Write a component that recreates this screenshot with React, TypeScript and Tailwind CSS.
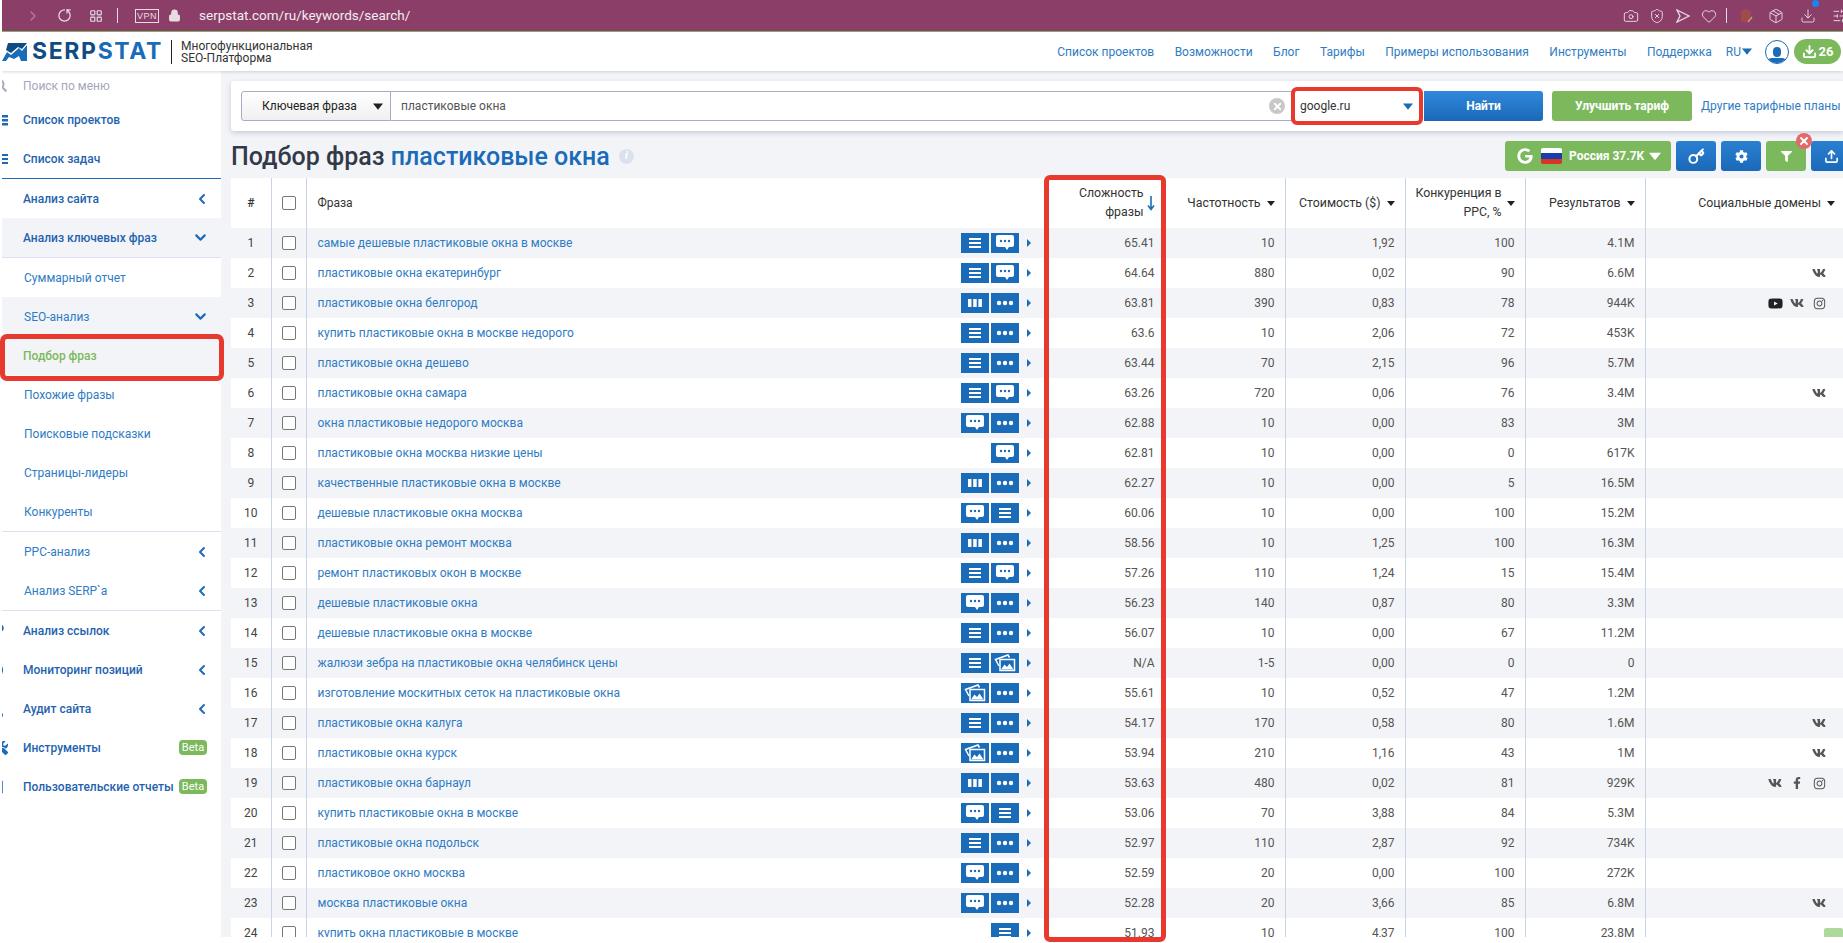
import React from "react";
import { Camera, ChevronDown, ChevronLeft, ChevronRight, Download, Heart, Key, LayoutGrid, Lock, Package, RotateCw, ShieldX, SlidersHorizontal, Upload, X } from "lucide-react";
import { FaCog, FaFacebookF, FaFilter, FaGoogle, FaInstagram, FaSearch, FaTools, FaVk, FaYoutube } from "react-icons/fa";

type Btn = "list" | "chat" | "cols" | "dots" | "img" | null;
type Row = [string, Btn, Btn, string, string, string, string, string, string[]];

const rows: Row[] = [
    ["самые дешевые пластиковые окна в москве", "list", "chat", "65.41", "10", "1,92", "100", "4.1M", []],
    ["пластиковые окна екатеринбург", "list", "chat", "64.64", "880", "0,02", "90", "6.6M", ["vk"]],
    ["пластиковые окна белгород", "cols", "dots", "63.81", "390", "0,83", "78", "944K", ["yt", "vk", "ig"]],
    ["купить пластиковые окна в москве недорого", "list", "dots", "63.6", "10", "2,06", "72", "453K", []],
    ["пластиковые окна дешево", "list", "dots", "63.44", "70", "2,15", "96", "5.7M", []],
    ["пластиковые окна самара", "list", "chat", "63.26", "720", "0,06", "76", "3.4M", ["vk"]],
    ["окна пластиковые недорого москва", "chat", "dots", "62.88", "10", "0,00", "83", "3M", []],
    ["пластиковые окна москва низкие цены", null, "chat", "62.81", "10", "0,00", "0", "617K", []],
    ["качественные пластиковые окна в москве", "cols", "dots", "62.27", "10", "0,00", "5", "16.5M", []],
    ["дешевые пластиковые окна москва", "chat", "list", "60.06", "10", "0,00", "100", "15.2M", []],
    ["пластиковые окна ремонт москва", "cols", "dots", "58.56", "10", "1,25", "100", "16.3M", []],
    ["ремонт пластиковых окон в москве", "list", "chat", "57.26", "110", "1,24", "15", "15.4M", []],
    ["дешевые пластиковые окна", "chat", "dots", "56.23", "140", "0,87", "80", "3.3M", []],
    ["дешевые пластиковые окна в москве", "list", "dots", "56.07", "10", "0,00", "67", "11.2M", []],
    ["жалюзи зебра на пластиковые окна челябинск цены", "list", "img", "N/A", "1-5", "0,00", "0", "0", []],
    ["изготовление москитных сеток на пластиковые окна", "img", "dots", "55.61", "10", "0,52", "47", "1.2M", []],
    ["пластиковые окна калуга", "list", "dots", "54.17", "170", "0,58", "80", "1.6M", ["vk"]],
    ["пластиковые окна курск", "img", "dots", "53.94", "210", "1,16", "43", "1M", ["vk"]],
    ["пластиковые окна барнаул", "cols", "dots", "53.63", "480", "0,02", "81", "929K", ["vk", "fb", "ig"]],
    ["купить пластиковые окна в москве", "chat", "list", "53.06", "70", "3,88", "84", "5.3M", []],
    ["пластиковые окна подольск", "list", "dots", "52.97", "110", "2,87", "92", "734K", []],
    ["пластиковое окно москва", "chat", "dots", "52.59", "20", "0,00", "100", "272K", []],
    ["москва пластиковые окна", "chat", "dots", "52.28", "20", "3,66", "85", "6.8M", ["vk"]],
    ["купить окна пластиковые в москве", null, "list", "51.93", "10", "4,37", "100", "23.8M", []],
];

function Caret({ className = "border-t-[#222]" }: { className?: string }) {
    return <span className={`inline-block shrink-0 w-0 h-0 border-x-[4px] border-t-[5px] border-x-transparent ${className}`} />;
}

function RowIcon({ type }: { type: Btn }) {
    if (type === "list") {
        return (
            <svg width="14" height="12" viewBox="0 0 14 12" fill="#fff">
                <rect x="1" y="1" width="12" height="2" />
                <rect x="1" y="5" width="12" height="2" />
                <rect x="1" y="9" width="12" height="2" />
            </svg>
        );
    }
    if (type === "chat") {
        return (
            <svg width="20" height="16" viewBox="0 0 20 16">
                <path d="M2 0h14a2 2 0 0 1 2 2v8a2 2 0 0 1-2 2h-3l-2 3-2-3H2a2 2 0 0 1-2-2V2a2 2 0 0 1 2-2z" fill="#fff" transform="translate(1 0)" />
                <circle cx="6" cy="6" r="1.2" fill="#1a6bb8" />
                <circle cx="10" cy="6" r="1.2" fill="#1a6bb8" />
                <circle cx="14" cy="6" r="1.2" fill="#1a6bb8" />
            </svg>
        );
    }
    if (type === "cols") {
        return (
            <svg width="14" height="8" viewBox="0 0 14 8" fill="#fff">
                <rect x="0" y="0" width="3.5" height="8" />
                <rect x="5.2" y="0" width="3.5" height="8" />
                <rect x="10.4" y="0" width="3.5" height="8" />
            </svg>
        );
    }
    if (type === "dots") {
        return (
            <svg width="18" height="6" viewBox="0 0 18 6" fill="#fff">
                <circle cx="3" cy="3" r="2.2" />
                <circle cx="9" cy="3" r="2.2" />
                <circle cx="15" cy="3" r="2.2" />
            </svg>
        );
    }
    return (
        <svg width="22" height="18" viewBox="0 0 22 18" fill="none" stroke="#fff" strokeWidth="1.5">
            <path d="M5 12 1.5 5.5 14 1l1.5 2.5" />
            <rect x="6" y="5.5" width="14.5" height="11" fill="#1a6bb8" />
            <path d="M7 15.5l3.5-5 2.5 2.5 2.5-3.5 4 6z" fill="#fff" stroke="none" />
        </svg>
    );
}

function ActionBtn({ type }: { type: Btn }) {
    if (!type) return <span className="w-[28px] h-5" />;
    return (
        <span className="w-[28px] h-5 bg-[#1a6bb8] flex items-center justify-center">
            <RowIcon type={type} />
        </span>
    );
}

function Social({ kind }: { kind: string }) {
    return (
        <span className="w-[22px] flex justify-center text-[#555]">
            {kind === "vk" && <FaVk size={14} />}
            {kind === "yt" && <FaYoutube size={15} className="text-[#222]" />}
            {kind === "ig" && <FaInstagram size={13} />}
            {kind === "fb" && <FaFacebookF size={12} />}
        </span>
    );
}

function MenuItem({ label, icon, arrow, sub, active, tint, beta }: { label: string; icon?: React.ReactNode; arrow?: "left" | "down"; sub?: boolean; active?: boolean; tint?: boolean; beta?: boolean }) {
    return (
        <div className={`h-[39px] shrink-0 flex items-center pr-[14px] ${tint ? "bg-[#f3f4f8]" : ""}`}>
            <span className="w-[21px] shrink-0 flex justify-start text-[#1a6bb8] overflow-hidden">{icon}</span>
            <span className={`flex-1 whitespace-nowrap text-[12px] ${active ? "text-[#7cb95c] font-medium" : sub ? "text-[#2f7cc4] ml-px" : "text-[#1f63b0] font-medium"}`}>{label}</span>
            {arrow === "left" && <ChevronLeft size={16} strokeWidth={3} className="text-[#1a6bb8] mr-[-3px]" />}
            {arrow === "down" && <ChevronDown size={17} strokeWidth={3} className="text-[#1a6bb8] mr-[-2px]" />}
            {beta && <span className="w-7 h-[15px] rounded-sm bg-[#7cb95c] text-white text-[11px] leading-[15px] text-center">Beta</span>}
        </div>
    );
}

function ClipIcon({ children }: { children: React.ReactNode }) {
    return <span className="ml-[-8px] flex">{children}</span>;
}

function Sidebar() {
    return (
        <aside className="w-[219px] shrink-0 h-full bg-white overflow-hidden flex flex-col">
            <div className="h-[29px] shrink-0 flex items-center">
                <span className="w-[21px] text-[#a9adba]"><ClipIcon><FaSearch size={13} /></ClipIcon></span>
                <span className="text-[12px] text-[#a3a7bb]">Поиск по меню</span>
            </div>
            <MenuItem label="Список проектов" icon={<ClipIcon><svg width="14" height="12" fill="#1a6bb8"><rect y="1" width="14" height="2.5" /><rect y="5" width="14" height="2.5" /><rect y="9" width="14" height="2.5" /></svg></ClipIcon>} />
            <MenuItem label="Список задач" icon={<ClipIcon><svg width="14" height="12" fill="#1a6bb8"><rect y="1" width="14" height="2" /><rect y="5" width="14" height="2" /><rect y="9" width="14" height="2" /></svg></ClipIcon>} />
            <div className="h-px shrink-0 bg-[#1a6bb8]" />
            <MenuItem label="Анализ сайта" arrow="left" icon={<ClipIcon><svg width="14" height="14" fill="#1a6bb8"><rect x="2" y="6" width="2" height="8" /><rect x="6" y="1" width="2" height="2" /><rect x="6" y="5" width="2" height="9" /></svg></ClipIcon>} />
            <MenuItem label="Анализ ключевых фраз" arrow="down" tint icon={<ClipIcon><svg width="14" height="14" fill="#1a6bb8"><circle cx="4" cy="6" r="4" /><circle cx="4" cy="6" r="1.2" fill="#f3f4f8" /></svg></ClipIcon>} />
            <div className="h-px shrink-0 bg-[#dbe2ef]" />
            <MenuItem label="Суммарный отчет" sub />
            <MenuItem label="SEO-анализ" sub arrow="down" tint />
            <MenuItem label="Подбор фраз" active tint />
            <MenuItem label="Похожие фразы" sub />
            <MenuItem label="Поисковые подсказки" sub />
            <MenuItem label="Страницы-лидеры" sub />
            <MenuItem label="Конкуренты" sub />
            <div className="h-px shrink-0 bg-[#dbe2ef]" />
            <MenuItem label="PPC-анализ" sub arrow="left" />
            <MenuItem label="Анализ SERP`a" sub arrow="left" />
            <div className="h-px shrink-0 bg-[#dbe2ef]" />
            <MenuItem label="Анализ ссылок" arrow="left" icon={<ClipIcon><svg width="14" height="14" fill="none" stroke="#1a6bb8" strokeWidth="2"><path d="M2 3a3.5 3 0 1 1 4 4l-2 3" /></svg></ClipIcon>} />
            <MenuItem label="Мониторинг позиций" arrow="left" icon={<ClipIcon><svg width="14" height="16" fill="none" stroke="#1a6bb8" strokeWidth="2.2"><path d="M2 2a6 6 0 0 1 0 12" /></svg></ClipIcon>} />
            <MenuItem label="Аудит сайта" arrow="left" icon={<ClipIcon><svg width="14" height="16" fill="none" stroke="#1a6bb8" strokeWidth="1.5"><path d="M1 1v8h6v5M1 9v5" /><circle cx="7" cy="14" r="1.3" fill="#1a6bb8" /></svg></ClipIcon>} />
            <MenuItem label="Инструменты" beta icon={<ClipIcon><FaTools size={14} /></ClipIcon>} />
            <MenuItem label="Пользовательские отчеты" beta icon={<ClipIcon><svg width="14" height="14" fill="none" stroke="#1a6bb8" strokeWidth="1.5"><rect x="1" y="1.5" width="7" height="11" /><path d="M2 5h4M2 8h4" /></svg></ClipIcon>} />
            <div className="mt-[117px]">
                <MenuItem label="Как начать" icon={<ClipIcon><ChevronDown size={14} /></ClipIcon>} />
            </div>
        </aside>
    );
}

function BrowserBar() {
    return (
        <div className="h-[32px] shrink-0 bg-[#8b3f68] border-b border-[#7cb95c] flex items-center text-[#e9dbe3] relative">
            <ChevronRight size={16} className="ml-[23px] opacity-40" />
            <RotateCw size={15} className="ml-[16px] scale-x-[-1] rotate-90" />
            <LayoutGrid size={14} className="ml-[17px]" />
            <span className="ml-[14px] w-px h-[15px] bg-[#e9dbe3]" />
            <span className="ml-[17px] w-[24px] h-[14px] border border-[#e9dbe3] text-[9px] leading-[12px] tracking-wider text-center font-['Liberation_Sans',sans-serif]">VPN</span>
            <Lock size={13} fill="currentColor" className="ml-[9px]" />
            <span className="ml-[18px] text-[13.5px] text-[#f4ecf0] whitespace-nowrap">serpstat.com/ru/keywords/search/</span>
            <div className="ml-auto flex items-center">
                <Camera size={16} strokeWidth={1.4} />
                <ShieldX size={16} strokeWidth={1.4} className="ml-[10px]" />
                <svg width="16" height="14" viewBox="0 0 16 14" fill="none" stroke="#e9dbe3" strokeWidth="1.3" className="ml-[10px]"><path d="M2 1l12 6-12 6 3-6z" /></svg>
                <Heart size={16} strokeWidth={1.4} className="ml-[10px]" />
                <span className="ml-[9px] w-px h-[15px] bg-[#e9dbe3]" />
                <svg width="14" height="16" viewBox="0 0 14 16" className="ml-[12px]"><path d="M2 5a5 4 0 0 1 10 0l-1 5-4 5-5-2z" fill="#a04a4e" /><path d="M9 14l4-5" stroke="#c9a067" strokeWidth="1.5" /></svg>
                <Package size={16} strokeWidth={1.4} className="ml-[15px]" />
                <Download size={16} strokeWidth={1.4} className="ml-[16px]" />
                <SlidersHorizontal size={16} strokeWidth={1.4} className="ml-[16px] mr-[-5px]" />
            </div>
            <span className="absolute right-[24px] top-0 w-[7px] h-[7px] rounded-full bg-[#1a84f0]" />
        </div>
    );
}

function Header() {
    const links = ["Список проектов", "Возможности", "Блог", "Тарифы", "Примеры использования", "Инструменты", "Поддержка"];
    return (
        <header className="h-[39px] shrink-0 bg-white shadow-[0_1px_3px_rgba(0,0,0,0.15)] flex items-center relative z-10">
            <svg width="25" height="18" viewBox="0 0 25 18" className="shrink-0">
                <path d="M6 0h19l-5 6-4-2-7 6-5-3z" fill="#0f4c81" />
                <path d="M0 18 5 9l4 3 8-7 3 3 5-6v16H19l-2-5-5 3-5-2-3 4z" fill="#1a6bb8" />
            </svg>
            <span className="ml-[5px] text-[23px] leading-none font-bold tracking-[1.65px] text-[#0f4c81] font-['Inter',sans-serif] whitespace-nowrap">SERP<span className="text-[#1a6bb8]">STAT</span></span>
            <span className="ml-[8px] w-px h-6 bg-[#222]" />
            <span className="ml-[9px] text-[12px] leading-[12px] text-[#333]">Многофункциональная<br />SEO-Платформа</span>
            <nav className="ml-auto flex items-center gap-[20.5px] text-[12px] text-[#2f7cc4] whitespace-nowrap">
                {links.map((l) => <a key={l}>{l}</a>)}
            </nav>
            <span className="ml-[14px] text-[12px] text-[#2f7cc4]">RU</span>
            <Caret className="border-t-[#1a6bb8] ml-[2px] scale-125" />
            <span className="ml-[14px] w-[24px] h-[24px] rounded-full border border-[#1a6bb8] overflow-hidden flex flex-col items-center justify-end">
                <span className="w-[8px] h-[10px] rounded-full bg-[#1a6bb8] mb-px" />
                <span className="w-[18px] h-[5px] rounded-t bg-[#1a6bb8]" />
            </span>
            <span className="ml-[5px] mr-[2px] w-[47px] h-[25px] rounded-full bg-[#7cb95c] text-white text-[13px] font-bold flex items-center justify-center gap-[2px]">
                <Download size={15} strokeWidth={3} />26
            </span>
        </header>
    );
}

function SearchPanel() {
    return (
        <div className="h-[50px] mt-[10px] bg-white rounded-l-[3px] shadow-[0_2px_5px_rgba(70,80,130,0.25)] flex items-center pl-[10px] whitespace-nowrap overflow-visible">
            <div className="w-[150px] shrink-0 h-[30px] bg-gradient-to-b from-white to-[#f0f0f0] border border-[#a5adc4] rounded-l-[3px] text-[12px] text-[#222] flex items-center justify-between pl-[20px] pr-[8px]">
                Ключевая фраза<Caret className="border-t-[#222] scale-125" />
            </div>
            <div className="w-[901px] shrink-0 h-[30px] border-y border-r border-[#a5adc4] text-[12px] text-[#555] flex items-center justify-between pl-[10px] pr-[6px]">
                пластиковые окна
                <span className="w-4 h-4 rounded-full bg-[#c8c8c8] flex items-center justify-center"><X size={11} strokeWidth={4} className="text-white" /></span>
            </div>
            <div className="w-[132px] shrink-0 h-[30px] text-[12px] text-[#333] flex items-center justify-between pl-[8px] pr-[12px]">
                google.ru<Caret className="border-t-[#1a6bb8] scale-125" />
            </div>
            <div className="w-[119px] shrink-0 h-[30px] rounded-r-[3px] bg-gradient-to-b from-[#3088dc] to-[#1a69b8] text-white text-[12px] font-bold flex items-center justify-center">Найти</div>
            <div className="ml-[9px] w-[140px] shrink-0 h-[30px] rounded-[3px] bg-[#7cb95c] text-white text-[12px] font-bold flex items-center justify-center">Улучшить тариф</div>
            <span className="ml-[9px] text-[12px] text-[#2f7cc4]">Другие тарифные планы</span>
        </div>
    );
}

function TitleRow() {
    return (
        <div className="h-[30px] mt-[10px] flex items-center">
            <h1 className="text-[25px] font-medium text-[#333a47] whitespace-nowrap pt-[2px]">Подбор фраз <span className="text-[#1a6bb8]">пластиковые окна</span></h1>
            <span className="ml-[9px] w-[15px] h-[15px] rounded-full bg-[#dbe1ee] text-white text-[11px] italic font-bold flex items-center justify-center">i</span>
            <div className="ml-auto flex gap-[5px] mr-[-8px] text-white">
                <div className="w-[166px] h-[30px] rounded-[3px] bg-[#7cb95c] flex items-center pl-[12px] text-[12px] font-bold whitespace-nowrap">
                    <FaGoogle size={16} />
                    <span className="ml-[8px] w-[21px] h-[16px] flex flex-col overflow-hidden rounded-[2px]">
                        <i className="flex-1 bg-white" /><i className="flex-1 bg-[#1a3fa8]" /><i className="flex-1 bg-[#d8342c]" />
                    </span>
                    <span className="ml-[7px]">Россия 37.7K</span>
                    <Caret className="border-t-white ml-[7px] scale-150" />
                </div>
                <div className="w-[40px] h-[30px] rounded-[3px] bg-gradient-to-b from-[#2b80d2] to-[#1a69b8] flex items-center justify-center"><Key size={17} strokeWidth={2.8} /></div>
                <div className="w-[40px] h-[30px] rounded-[3px] bg-gradient-to-b from-[#2b80d2] to-[#1a69b8] flex items-center justify-center"><FaCog size={13} /></div>
                <div className="w-[40px] h-[30px] rounded-[3px] bg-[#7cb95c] flex items-center justify-center relative">
                    <FaFilter size={11} />
                    <span className="absolute right-[-6px] top-[-8px] w-4 h-4 rounded-full bg-[#e46a6a] flex items-center justify-center"><X size={12} strokeWidth={4} /></span>
                </div>
                <div className="w-[40px] h-[30px] rounded-[3px] bg-gradient-to-b from-[#2b80d2] to-[#1a69b8] flex items-center justify-center"><Upload size={15} strokeWidth={2.6} /></div>
            </div>
        </div>
    );
}

function KeywordTable() {
    const th = "border-r border-[#c9d4e6] font-normal text-[12.3px] leading-[19px] text-[#333] text-right pr-[10px]";
    const td = "border-r border-[#c9d4e6] text-[12px] text-[#555] text-right pr-[10px]";
    return (
        <div className="mt-[7px] bg-white overflow-hidden flex-1 min-h-0">
            <table className="w-full table-fixed border-collapse">
                <colgroup>
                    <col className="w-[40px]" />
                    <col className="w-[35px]" />
                    <col />
                    <col className="w-[120px]" />
                    <col className="w-[120px]" />
                    <col className="w-[120px]" />
                    <col className="w-[120px]" />
                    <col className="w-[120px]" />
                    <col className="w-[198px]" />
                </colgroup>
                <thead>
                    <tr className="h-[50px]">
                        <th className="border-r border-[#c9d4e6] text-[12px] font-medium text-[#333]">#</th>
                        <th className="border-r border-[#c9d4e6]"><span className="block mx-auto w-[14px] h-[14px] border border-[#777] rounded-[2px] bg-white" /></th>
                        <th className="text-left pl-[11px] font-normal text-[12px] text-[#333]">Фраза</th>
                        <th className={`${th} pr-[9px]`}>
                            <div className="flex items-center justify-end gap-[3px]">
                                <span>Сложность<br />фразы</span>
                                <svg width="8" height="15" viewBox="0 0 8 15" fill="none" stroke="#1a6bb8" strokeWidth="1.6"><path d="M4 0v13M1 9.5 4 13.5 7 9.5" /></svg>
                            </div>
                        </th>
                        <th className={th}><div className="flex items-center justify-end gap-[6px] whitespace-nowrap">Частотность<Caret /></div></th>
                        <th className={th}><div className="flex items-center justify-end gap-[6px] whitespace-nowrap">Стоимость ($)<Caret /></div></th>
                        <th className={th}><div className="flex items-center justify-end gap-[5px]"><span>Конкуренция в<br />PPC, %</span><Caret /></div></th>
                        <th className={th}><div className="flex items-center justify-end gap-[6px] whitespace-nowrap">Результатов<Caret /></div></th>
                        <th className="font-normal text-[12.3px] text-[#333] pr-[8px]"><div className="flex items-center justify-end gap-[6px] whitespace-nowrap">Социальные домены<Caret /></div></th>
                    </tr>
                </thead>
                <tbody>
                    {rows.map((r, i) => (
                        <tr key={i} className={`h-[30px] ${i % 2 === 0 ? "bg-[#f3f4f8]" : "bg-white"}`}>
                            <td className="border-r border-[#c9d4e6] text-center text-[12px] text-[#444]">{i + 1}</td>
                            <td className="border-r border-[#c9d4e6]"><span className="block mx-auto w-[14px] h-[14px] border border-[#777] rounded-[2px] bg-white" /></td>
                            <td className="pl-[11px] pr-[14px]">
                                <div className="flex items-center">
                                    <a className="flex-1 text-[12px] text-[#2f7cc4] whitespace-nowrap">{r[0]}</a>
                                    <span className="flex gap-[2px] items-center">
                                        <ActionBtn type={r[1]} />
                                        <ActionBtn type={r[2]} />
                                        <span className="ml-[6px] w-0 h-0 border-y-[4px] border-l-[4px] border-y-transparent border-l-[#1a6bb8]" />
                                    </span>
                                </div>
                            </td>
                            <td className={td}>{r[3]}</td>
                            <td className={td}>{r[4]}</td>
                            <td className={td}>{r[5]}</td>
                            <td className={td}>{r[6]}</td>
                            <td className={td}>{r[7]}</td>
                            <td className="pr-[13px]"><div className="flex justify-end items-center">{r[8].map((s) => <Social key={s} kind={s} />)}</div></td>
                        </tr>
                    ))}
                </tbody>
            </table>
        </div>
    );
}

export default function App() {
    return (
        <div className="relative w-[1843px] h-[943px] bg-white pl-[2px] overflow-hidden font-['Roboto',sans-serif]">
            <div className="h-[937px] flex flex-col overflow-hidden">
                <BrowserBar />
                <Header />
                <div className="flex-1 min-h-0 flex bg-[#f3f4f8]">
                    <Sidebar />
                    <main className="flex-1 min-w-0 pl-[10px] flex flex-col">
                        <SearchPanel />
                        <TitleRow />
                        <KeywordTable />
                    </main>
                </div>
            </div>

            {/* red annotations drawn over the screenshot */}
            <div className="absolute left-0 top-[334px] w-[224px] h-[47px] border-[5px] border-[#e8392f] rounded-[7px]" />
            <div className="absolute left-[1291px] top-[87px] w-[132px] h-[38px] border-[4px] border-[#e8392f] rounded-[6px]" />
            <div className="absolute left-[1044px] top-[175px] w-[122px] h-[767px] border-[5px] border-[#e8392f] rounded-[6px]" />
            <div className="absolute right-0 top-[928px] w-[19px] h-[9px] rounded-t-[2px] bg-[#add99a]" />
        </div>
    );
}
